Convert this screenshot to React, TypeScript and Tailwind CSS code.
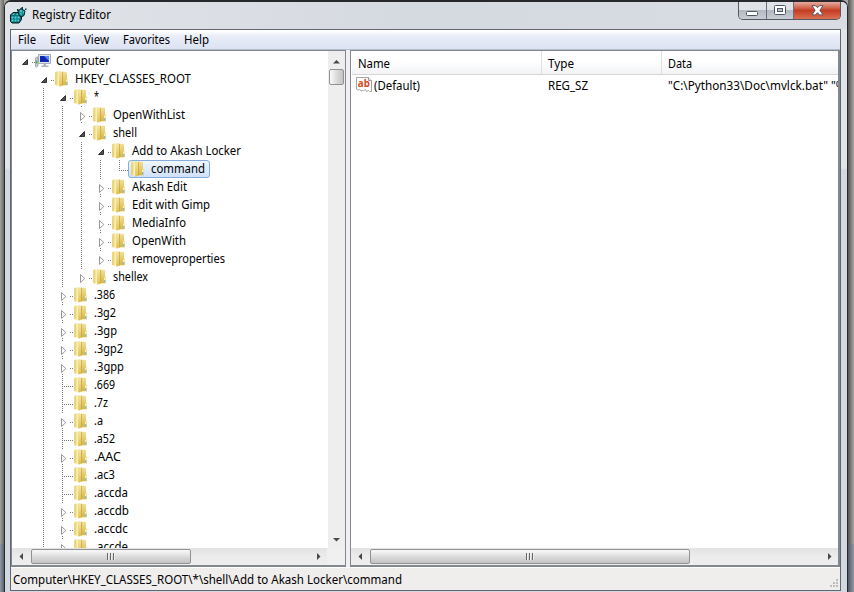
import React from 'react';

type Kind = 'open' | 'closed' | 'leaf';
type Node = { name: string; level: number; kind: Kind; last?: boolean; guides: boolean[]; w: number; selected?: boolean };

const g1 = [false, true];
const g2 = [false, true, true];
const g3 = [false, true, true, true];
const top = (name: string, kind: Kind, w: number): Node => ({ name, level: 2, kind, guides: g1, w });

const nodes: Node[] = [
  { name: 'Computer', level: 0, kind: 'open', last: true, guides: [], w: 54 },
  { name: 'HKEY_CLASSES_ROOT', level: 1, kind: 'open', guides: [false], w: 116 },
  { name: '*', level: 2, kind: 'open', guides: g1, w: 5 },
  { name: 'OpenWithList', level: 3, kind: 'closed', guides: g2, w: 72 },
  { name: 'shell', level: 3, kind: 'open', guides: g2, w: 24 },
  { name: 'Add to Akash Locker', level: 4, kind: 'open', guides: g3, w: 109 },
  { name: 'command', level: 5, kind: 'leaf', last: true, guides: [...g3, true], w: 54, selected: true },
  { name: 'Akash Edit', level: 4, kind: 'closed', guides: g3, w: 55 },
  { name: 'Edit with Gimp', level: 4, kind: 'closed', guides: g3, w: 78 },
  { name: 'MediaInfo', level: 4, kind: 'closed', guides: g3, w: 54 },
  { name: 'OpenWith', level: 4, kind: 'closed', guides: g3, w: 54 },
  { name: 'removeproperties', level: 4, kind: 'closed', last: true, guides: g3, w: 93 },
  { name: 'shellex', level: 3, kind: 'closed', last: true, guides: g2, w: 35 },
  top('.386', 'closed', 21), top('.3g2', 'closed', 22), top('.3gp', 'closed', 23), top('.3gp2', 'closed', 29),
  top('.3gpp', 'closed', 30), top('.669', 'leaf', 21), top('.7z', 'leaf', 14), top('.a', 'closed', 9),
  top('.a52', 'leaf', 21), top('.AAC', 'closed', 27), top('.ac3', 'leaf', 21), top('.accda', 'leaf', 34),
  top('.accdb', 'closed', 35), top('.accdc', 'closed', 34), top('.accde', 'closed', 34),
];

/* Single-line label fitted to a fixed advance width. */
function Label({ text, w, size = 12 }: { text: string; w: number; size?: number }) {
  return (
    <svg width={w + 2} height="18" className="block shrink-0 overflow-visible">
      <text x="0" y="13" fontSize={size} fill="#000" textLength={w} lengthAdjust="spacingAndGlyphs">{text}</text>
    </svg>
  );
}

function Folder() {
  return (
    <svg width="16" height="18" viewBox="0 0 16 18" className="block shrink-0">
      <defs>
        <linearGradient id="fl" x1="0" x2="1"><stop offset="0" stopColor="#e0c355" /><stop offset=".6" stopColor="#fbf2b4" /><stop offset="1" stopColor="#e2c865" /></linearGradient>
        <linearGradient id="fm" x1="0" x2="0" y1="0" y2="1"><stop offset="0" stopColor="#f5e7a6" /><stop offset="1" stopColor="#dfbf52" /></linearGradient>
        <linearGradient id="fr" x1="0" x2="0" y1="0" y2="1"><stop offset="0" stopColor="#f2e09a" /><stop offset="1" stopColor="#dbb53d" /></linearGradient>
      </defs>
      <path d="M6 1.800h6.300q.7 0 .7.700v6l.8.700v6H7z" fill="url(#fr)" />
      <path d="M1.300 2.500 2.300 1.500H6.500v14H2l-.8-.8z" fill="url(#fl)" />
      <path d="M5.300 2.500 8.500 1.500v14L5.300 16.800z" fill="url(#fm)" />
      <path d="M8.500 1.800v13.700" stroke="#c4a040" strokeWidth=".7" />
      <path d="M12.200 9.500h1.300v5h-1.300z" fill="#fffbe0" />
      <path d="M12.300 12h1v2.500h-1z" fill="#48aee0" />
    </svg>
  );
}

function ComputerIcon() {
  return (
    <svg width="17" height="18" viewBox="0 0 17 18" className="-mr-px block shrink-0">
      <path d="M.5 6 1.500 5H3v9l-1.500 1-1-.5z" fill="#c4ccd0" stroke="#7b888e" strokeWidth=".6" />
      <path d="M1 8.500h1.300v3H1z" fill="#35b93c" />
      <path d="M3.500 2.500h12v9h-12z" fill="#e0e5eb" stroke="#a4afbb" />
      <path d="M5 4h9v6H5z" fill="#1024b5" />
      <path d="M9 4h5v5z" fill="#5b88e8" />
      <path d="M8.500 12h2.500v1.500h2.500v1.500H6.500v-1.500h2z" fill="#aab4bc" />
    </svg>
  );
}

function Guide({ kind, last }: { kind: 'pass' | 'blank' | Kind; last?: boolean }) {
  const dots = { stroke: '#777', strokeWidth: 1, strokeDasharray: '1 1' };
  return (
    <svg width="19" height="18" className="block shrink-0" shapeRendering={kind === 'pass' || kind === 'leaf' ? 'crispEdges' : undefined}>
      {kind === 'pass' && <path d="M8.500 0v18" {...dots} />}
      {kind === 'leaf' && <path d={last ? 'M8.500 0v10M8 10.500h11' : 'M8.500 0v18M8 10.500h11'} {...dots} />}
      {(kind === 'open' || kind === 'closed') && <path d="M16 10.500h3" {...dots} />}
      {kind === 'closed' && <path d={last ? 'M8.500 0v2' : 'M8.500 0v2M8.500 16v2'} {...dots} />}
      {kind === 'open' && <path d="M11.500 7.500v5h-5z" fill="#505050" stroke="#262626" strokeWidth=".9" strokeLinejoin="round" />}
      {kind === 'closed' && <path d="M7.500 6.500v8l4.300-4z" fill="#fff" stroke="#989898" strokeLinejoin="round" />}
    </svg>
  );
}

function Row({ node }: { node: Node }) {
  return (
    <div className="flex h-[18px] shrink-0 pl-1">
      {node.guides.map((g, i) => <Guide key={i} kind={g ? 'pass' : 'blank'} />)}
      <Guide kind={node.kind} last={node.last} />
      <div className={node.selected ? '-ml-[2px] flex h-[18px] w-[82px] rounded-[3px] border border-[#84acdd] bg-linear-to-b from-[#f0f6fd] to-[#cfe1f9]' : 'flex'}>
        <div className={node.selected ? '-mt-px ml-px flex gap-[5px]' : 'flex gap-[5px]'}>
          {node.level === 0 ? <ComputerIcon /> : <Folder />}
          <Label text={node.name} w={node.w} />
        </div>
      </div>
    </div>
  );
}

function Arrow({ dir }: { dir: 'up' | 'down' | 'left' | 'right' }) {
  const d = { up: 'M1 6.500 4.500 3 8 6.500z', down: 'M1 3h7L4.500 6.500z', left: 'M6 1v7L2.500 4.500z', right: 'M3 1v7l3.500-3.500z' }[dir];
  return <svg width="9" height="9" className="block shrink-0"><path d={d} fill="#484848" /></svg>;
}

function HScroll({ thumb }: { thumb: string }) {
  return (
    <div className="flex h-[17px] flex-1 items-center bg-linear-to-b from-[#e3e3e3] via-[#ececec] to-[#eeeeee]">
      <div className="flex w-[18px] shrink-0 justify-center"><Arrow dir="left" /></div>
      <div className={`${thumb} flex h-[15px] shrink-0 items-center justify-center gap-px rounded-[2px] border border-[#929292] bg-linear-to-b from-[#f5f5f5] from-10% via-[#dcdcdc] via-50% to-[#c3c3c3]`}>
        <i className="h-[7px] w-[2px] border-r border-[#eee] bg-[#666]" />
        <i className="h-[7px] w-[2px] border-r border-[#eee] bg-[#666]" />
        <i className="h-[7px] w-[2px] border-r border-[#eee] bg-[#666]" />
      </div>
      <div className="flex-1" />
      <div className="flex w-[18px] shrink-0 justify-center"><Arrow dir="right" /></div>
    </div>
  );
}

function RegistryIcon() {
  return (
    <svg width="17" height="17" viewBox="0 0 17 17" className="block">
      <path d="M.5 8 3 5.500h7l1.500 2v5L9 16H2l-1.500-1.500z" fill="#0b7076" stroke="#001c20" />
      <path d="m2 7.500 1.500-1H5L3.500 8zM5.500 7.500l1.500-1h2L7.500 8zM1.500 9.500h2v2h-2zM4.500 9.500h2v2h-2zM7.500 9.500h2v2h-2zM1.500 12.500h2v2h-2zM4.500 12.500h2v2h-2zM7.500 12.500h1.500v2H7.500z" fill="#4fd6da" />
      <path d="m8 4 3-2.500 4 2.500-1 4.500-3 1.500-2.500-3z" fill="#118b90" stroke="#001c20" />
      <path d="m9.500 4 1.500-1 1.500 1-1.500 1zM10 6.500l1.500-1V8zM13 4.800l1.300-.5-.5 2.700z" fill="#65e3e5" />
      <path d="M7 2h1.500v2H7zM11.500 0H13v2h-1.500zM15 1.500h1.500V3H15zM14 3h1v1h-1z" fill="#033f44" />
    </svg>
  );
}

function StringIcon() {
  return (
    <svg width="17" height="18" viewBox="0 0 17 18" className="block shrink-0">
      <path d="M.5 2.500h12l3 3v11h-2l-1-1-2 1-1-2-2 1-2 .5-2-1.500-2 .5-1-1z" fill="#fff" stroke="#a4a4a4" />
      <path d="M12.500 2.500v3h3" fill="#eee" stroke="#999" />
      <text x="1.800" y="12" fontSize="11" fontWeight="bold" fill="#d94722" textLength="12" lengthAdjust="spacingAndGlyphs">ab</text>
    </svg>
  );
}

function TitleButtons() {
  return (
    <div className="mr-[6px] flex h-[18px] w-[103px] overflow-hidden rounded-b-[5px] border border-t-0 border-[#535963] bg-[#acb2bb]">
      <div className="flex w-[28px] items-center justify-center border-r border-[#697079] bg-linear-to-b from-[#dfe2e6] from-45% via-[#b4b9c1] via-50% to-[#c9ced6]">
        <svg width="13" height="6" className="mt-1.5"><rect x=".5" y=".5" width="11" height="4" rx="1" fill="#fff" stroke="#505664" /></svg>
      </div>
      <div className="flex w-[27px] items-center justify-center border-r border-[#697079] bg-linear-to-b from-[#dfe2e6] from-45% via-[#b4b9c1] via-50% to-[#c9ced6]">
        <svg width="12" height="10" className="-mt-px"><rect x=".5" y=".5" width="11" height="9" rx="1" fill="#fff" stroke="#505664" /><rect x="3.500" y="3.500" width="5" height="3" fill="#bec3ca" stroke="#505664" /></svg>
      </div>
      <div className="flex flex-1 items-center justify-center bg-linear-to-b from-[#e6ac9e] via-[#c33b23] via-50% to-[#dc7051]">
        <svg width="13" height="11" viewBox="0 0 13 11" className="-mt-px"><path d="M1 .7h3.500l2 2 2-2H12L8.900 5.300 12 9.900H8.500l-2-2.200-2 2.200H1l3.100-4.600z" fill="#fff" stroke="#555866" /></svg>
      </div>
    </div>
  );
}

function MenuBar() {
  const items = [['File', 18, 'ml-[7px]'], ['Edit', 20, 'ml-[12px]'], ['View', 25, 'ml-[12px]'], ['Favorites', 47, 'ml-[12px]'], ['Help', 25, 'ml-[12px]']] as const;
  return (
    <div className="flex h-[20px] shrink-0 border-b border-[#b6bccc] bg-linear-to-b from-white from-5% via-[#e9edf7] via-32% to-[#dce3f3]">
      {items.map(([t, w, m]) => <div key={t} className={`mt-px ${m}`}><Label text={t} w={w} /></div>)}
    </div>
  );
}

export default function App() {
  return (
    <div className="flex h-[592px] w-[854px] overflow-hidden bg-[#a8a7a4] font-['Noto_Sans','Open_Sans',sans-serif]">
      <div className="flex w-1 shrink-0 flex-col">
        <div className="h-[544px] bg-linear-to-r from-[#a5a5a1] to-[#666]" />
        <div className="flex-1 bg-linear-to-r from-[#929baa] to-[#5c626b]" />
      </div>
      <div className="flex w-[844px] shrink-0 flex-col rounded-t-[7px] border-x border-t-2 border-[#27282c] bg-linear-to-b from-[#e1e5e9] from-[166px] to-[#d3d9e1] to-[168px]">
        <div className="flex h-[27px] shrink-0 rounded-t-[5px] bg-linear-to-r from-[#e1e4e8] via-[#d5d9e0] to-[#d9dde3]">
          <div className="ml-[5px] mt-[5px]"><RegistryIcon /></div>
          <div className="ml-[5px] mt-[4px]"><Label text="Registry Editor" w={79} /></div>
          <div className="ml-auto"><TitleButtons /></div>
        </div>
        <div className="ml-[5px] flex h-[562px] w-[831px] shrink-0 flex-col border border-[#616671] bg-[#f0f0f0]">
          <MenuBar />
          <div className="flex h-[517px] shrink-0">
            <div className="flex w-[335px] flex-col border-2 border-l border-t border-r border-[#828790] bg-white">
              <div className="flex h-[497px] shrink-0">
                <div className="min-w-0 flex-1 overflow-hidden pt-px">{nodes.map((n) => <Row key={n.name} node={n} />)}</div>
                <div className="flex w-[17px] shrink-0 flex-col items-center bg-[#eeeeee] pb-1 pr-px">
                  <div className="flex h-[18px] items-center pt-0.5"><Arrow dir="up" /></div>
                  <div className="h-[16px] w-[15px] rounded-[2px] border border-[#929292] bg-linear-to-r from-[#f5f5f5] from-10% via-[#dcdcdc] via-50% to-[#c3c3c3]" />
                  <div className="mt-auto"><Arrow dir="down" /></div>
                </div>
              </div>
              <div className="flex bg-[#f0f0f0]"><HScroll thumb="w-[160px] ml-px" /><div className="w-[18px]" /></div>
            </div>
            <div className="w-[4px] bg-[#f0f0f0]" />
            <div className="flex w-[490px] flex-col border-2 border-l border-t border-[#828790] bg-white">
              <div className="ml-px flex h-[24px] shrink-0 border-b border-[#d5d5d5] bg-linear-to-b from-white from-45% to-[#f2f3f5]">
                <div className="w-[190px] border-r border-[#dfdfdf] pl-[6px] pt-[4px]"><Label text="Name" w={32} /></div>
                <div className="w-[120px] border-r border-[#dfdfdf] pl-[6px] pt-[4px]"><Label text="Type" w={26} /></div>
                <div className="pl-[6px] pt-[4px]"><Label text="Data" w={24} /></div>
              </div>
              <div className="ml-px flex h-[18px] shrink-0 overflow-hidden">
                <div className="flex w-[190px] shrink-0 pl-[4px]"><StringIcon /><div className="ml-px mt-[2px]"><Label text="(Default)" w={46} /></div></div>
                <div className="mt-[2px] w-[120px] shrink-0 pl-[6px]"><Label text="REG_SZ" w={40} /></div>
                <div className="mt-[2px] shrink-0 pl-[6px]"><Label text={'"C:\\Python33\\Doc\\mvlck.bat" "%1"'} w={189} /></div>
              </div>
              <div className="flex-1" />
              <div className="flex"><HScroll thumb="w-[320px] ml-px" /></div>
            </div>
          </div>
          <div className="flex h-[23px] shrink-0 border-t border-white bg-[#f0eded]">
            <div className="ml-[2px] mt-[3px]"><Label text="Computer\HKEY_CLASSES_ROOT\*\shell\Add to Akash Locker\command" w={389} /></div>
            <svg width="9" height="9" className="mb-[2px] ml-auto mr-px self-end"><path d="M6 0h2v2H6zM3 3h2v2H3zM6 3h2v2H6zM0 6h2v2H0zM3 6h2v2H3zM6 6h2v2H6z" fill="#bdbdbd" /></svg>
          </div>
        </div>
      </div>
      <div className="flex w-[6px] flex-col">
        <div className="h-[544px] bg-linear-to-r from-[#555] to-[#aaa9a4]" />
        <div className="flex-1 bg-linear-to-r from-[#555b63] to-[#929baa]" />
      </div>
    </div>
  );
}
